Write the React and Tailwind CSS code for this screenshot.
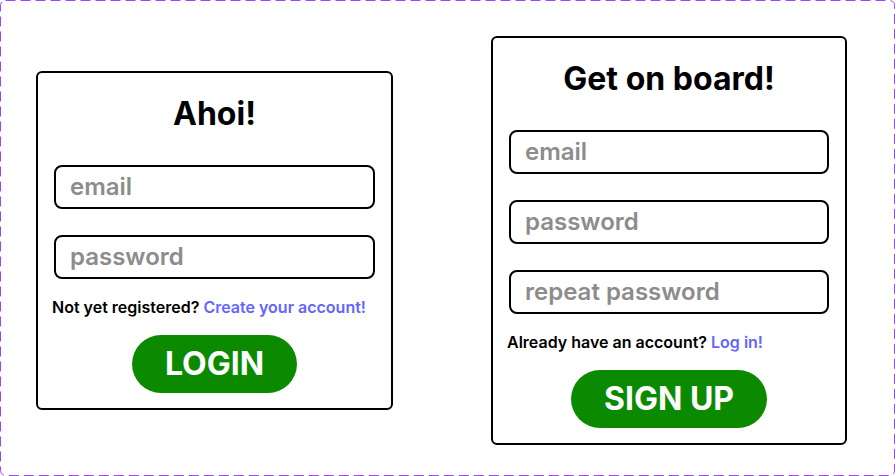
import React from "react";

function Field({ placeholder }) {
  return (
    <div className="w-full h-[44px] border-2 border-black rounded-[8px] flex items-center pl-[14px] text-[24px] font-semibold text-[#8c8c8c] leading-none">
      {placeholder}
    </div>
  );
}

function Card({ width, title, fields, question, link, button }) {
  return (
    <div
      className={`${width} border-2 border-black rounded-[6px] bg-white px-4 pt-[22px] pb-[15px] flex flex-col items-center`}
    >
      <div className="text-[32px] leading-[38px] font-bold text-black">{title}</div>
      <div className="w-full mt-[32px] flex flex-col gap-[26px]">
        {fields.map((f) => (
          <Field key={f} placeholder={f} />
        ))}
      </div>
      <div className="self-start -ml-[2px] mt-[18px] text-[16px] leading-[21px] font-semibold text-black">
        {question} <span className="text-[#6464ff]">{link}</span>
      </div>
      <div className="mt-[17px] h-[58px] px-[33px] rounded-full bg-[#0b8a00] text-white text-[32px] font-bold flex items-center justify-center leading-none">
        {button}
      </div>
    </div>
  );
}

export default function App() {
  return (
    <div
      className="relative w-[895px] h-[476px] bg-white flex items-center pl-[36px] pt-[4px] gap-[98px]"
      style={{ fontFamily: "Inter, 'Noto Sans', sans-serif" }}
    >
      <svg
        className="absolute inset-0 pointer-events-none"
        width="895"
        height="476"
        viewBox="0 0 895 476"
      >
        <rect
          x="0.5"
          y="0.5"
          width="894"
          height="475"
          rx="5"
          fill="none"
          stroke="#9747FF"
          strokeWidth="1"
          strokeDasharray="10 5"
        />
      </svg>
      <Card
        width="w-[357px]"
        title="Ahoi!"
        fields={["email", "password"]}
        question="Not yet registered?"
        link="Create your account!"
        button="LOGIN"
      />
      <Card
        width="w-[356px]"
        title="Get on board!"
        fields={["email", "password", "repeat password"]}
        question="Already have an account?"
        link="Log in!"
        button="SIGN UP"
      />
    </div>
  );
}
